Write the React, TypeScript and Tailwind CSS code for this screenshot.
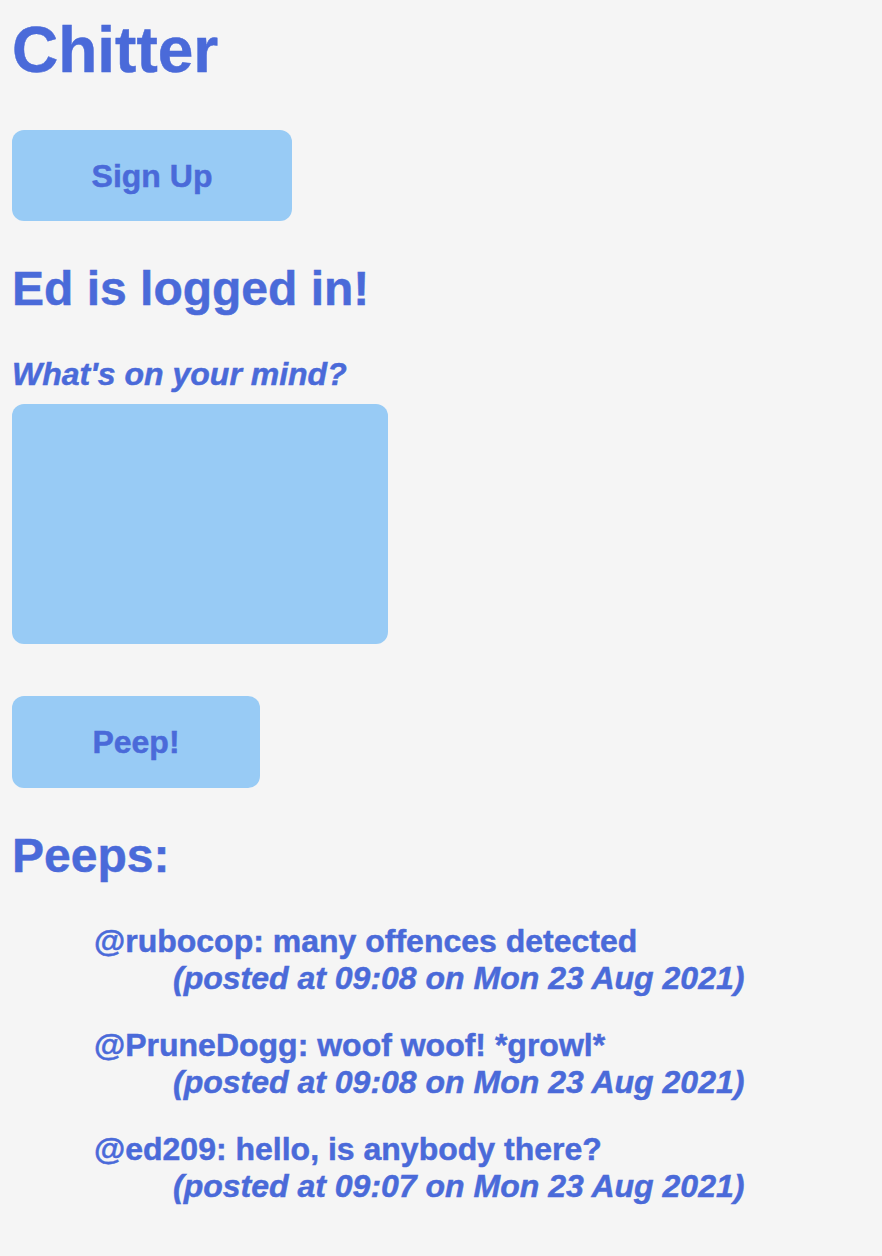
const peeps = [
  { handle: "rubocop", body: "many offences detected", time: "09:08", date: "Mon 23 Aug 2021" },
  { handle: "PruneDogg", body: "woof woof! *growl*", time: "09:08", date: "Mon 23 Aug 2021" },
  { handle: "ed209", body: "hello, is anybody there?", time: "09:07", date: "Mon 23 Aug 2021" },
];

const App = () => {
  return (
    <div className="min-h-screen bg-[#f5f5f5] px-3 pb-10 font-['Liberation_Sans',Arial,sans-serif] font-bold text-[#4a6ad9] [-webkit-text-stroke:0.03em_#4a6ad9]">
      <h1 className="pt-[14px] text-[64px] leading-[73px]">Chitter</h1>

      <button className="mt-[43px] flex h-[91px] w-[280px] items-center justify-center rounded-xl bg-[#98cbf5] text-[32px] font-bold text-[#4a6ad9]">
        Sign Up
      </button>

      <h2 className="mt-[40px] text-[48px] leading-[55px]">Ed is logged in!</h2>

      <form className="flex flex-col items-start" onSubmit={(e) => e.preventDefault()}>
        <label htmlFor="peep" className="mt-[40px] text-[32px] italic leading-[37px]">
          What's on your mind?
        </label>
        <textarea
          id="peep"
          className="mt-[11px] h-[240px] w-[376px] resize-none rounded-xl bg-[#98cbf5] p-3 text-[32px] outline-none"
        />
        <button className="mt-[52px] flex h-[92px] w-[248px] items-center justify-center rounded-xl bg-[#98cbf5] text-[32px] font-bold text-[#4a6ad9]">
          Peep!
        </button>
      </form>

      <h2 className="mt-[40px] text-[48px] leading-[55px]">Peeps:</h2>

      <ul className="mt-[40px] flex flex-col gap-[30px] pl-[82px] text-[32px] leading-[37px]">
        {peeps.map((peep) => (
          <li key={peep.handle + peep.time}>
            <div>
              @{peep.handle}: {peep.body}
            </div>
            <div className="pl-[79px] italic">
              (posted at {peep.time} on {peep.date})
            </div>
          </li>
        ))}
      </ul>
    </div>
  );
};

export default App;
